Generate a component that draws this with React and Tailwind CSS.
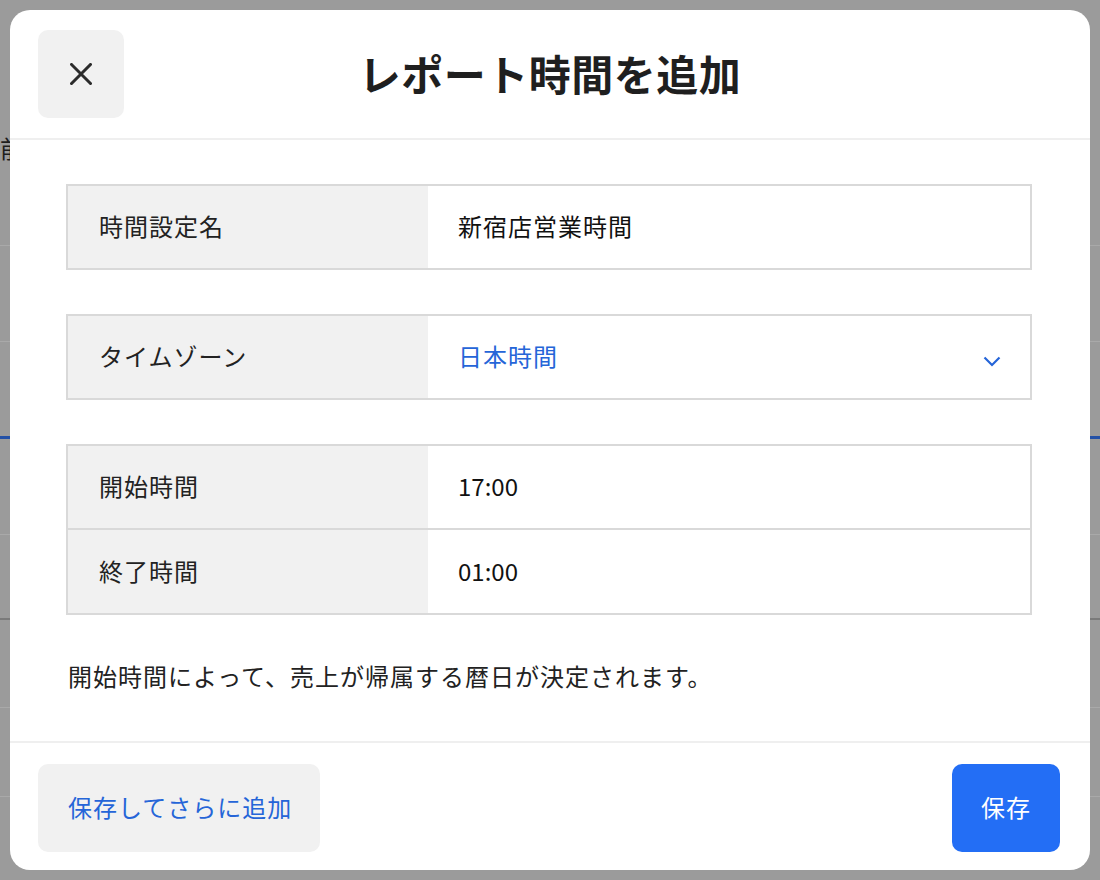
import React from "react";

const font = { fontFamily: '"Noto Sans CJK JP", "Noto Sans", sans-serif' };

function Row({ label, children, h = "h-[82px]", track = "tracking-[1px]" }) {
  return (
    <div className={`flex ${h}`}>
      <div className="w-[360px] shrink-0 bg-[#f1f1f1] flex items-center pl-[31px] pb-[2px] text-[24px] tracking-[1px] text-[#222]">
        {label}
      </div>
      <div className={`flex-1 flex items-center pl-[30px] pr-[28px] pb-[2px] text-[24px] ${track} text-[#111]`}>
        {children}
      </div>
    </div>
  );
}

export default function App() {
  return (
    <div
      className="relative w-[1100px] h-[880px] overflow-hidden bg-[#9b9b9b]"
      style={font}
    >
      {/* background page under overlay */}
      <div className="flex flex-col">
        <div className="h-[245px] pt-[136px] text-[24px] leading-none text-[#1e1e1e]">前</div>
        <div className="h-[96px] border-t border-[#a9a9a9]" />
        <div className="h-[95px] border-t border-[#a9a9a9]" />
        <div className="h-[98px] border-t-[3px] border-[#2350a6]" />
        <div className="h-[84px] border-t border-[#a9a9a9]" />
        <div className="h-[89px] border-t-2 border-[#7a7a7a]" />
        <div className="h-[89px] border-t border-[#a9a9a9]" />
        <div className="h-[84px] border-t border-[#a9a9a9]" />
      </div>

      {/* modal */}
      <div className="absolute left-[10px] top-[10px] w-[1080px] h-[860px] rounded-[20px] bg-white flex flex-col">
        <div className="grid grid-cols-[86px_1fr_86px] items-center px-[28px] pt-[20px] pb-[20px] border-b-2 border-[#efefef]">
          <button className="w-[86px] h-[88px] rounded-[10px] bg-[#f1f1f1] flex items-center justify-center">
            <svg width="22" height="22" viewBox="0 0 22 22" fill="none">
              <path d="M1.5 1.5 L20.5 20.5 M20.5 1.5 L1.5 20.5" stroke="#2b2b2b" strokeWidth="3" strokeLinecap="square" />
            </svg>
          </button>
          <h1 className="text-center text-[42px] font-bold text-[#1f1f1f] leading-none tracking-[0.5px] -mt-[3px]">
            レポート時間を追加
          </h1>
          <div />
        </div>

        <div className="flex-1 flex flex-col px-[56px] pt-[44px]">
          <div className="w-[966px] border-2 border-[#d9d9d9]">
            <Row label="時間設定名">新宿店営業時間</Row>
          </div>
          <div className="w-[966px] border-2 border-[#d9d9d9] mt-[44px]">
            <Row label="タイムゾーン">
              <div className="flex-1 flex items-center justify-between text-[#2565d8]">
                <span>日本時間</span>
                <svg width="18" height="11" viewBox="0 0 18 11" fill="none" className="mr-[1px] mt-[10px]">
                  <path d="M1.5 1.5 L9 9 L16.5 1.5" stroke="#2565d8" strokeWidth="2.2" />
                </svg>
              </div>
            </Row>
          </div>
          <div className="w-[966px] border-2 border-[#d9d9d9] mt-[44px] flex flex-col">
            <Row label="開始時間" track="tracking-normal">17:00</Row>
            <div className="h-[2px] bg-[#d9d9d9]" />
            <Row label="終了時間" h="h-[83px]" track="tracking-normal">01:00</Row>
          </div>
          <p className="mt-[44px] pl-[2px] text-[24px] tracking-[1px] text-[#222] leading-[34px]">
            開始時間によって、売上が帰属する暦日が決定されます。
          </p>
        </div>

        <div className="flex items-center justify-between border-t-2 border-[#efefef] pl-[28px] pr-[30px] pt-[21px] pb-[18px]">
          <button className="h-[88px] pl-[30px] pr-[28px] rounded-[10px] bg-[#f1f1f1] pb-[2px] text-[24px] tracking-[1px] text-[#2565d8]">
            保存してさらに追加
          </button>
          <button className="h-[88px] w-[108px] rounded-[10px] bg-[#236ef5] pb-[2px] text-[24px] tracking-[1px] text-white">
            保存
          </button>
        </div>
      </div>
    </div>
  );
}
